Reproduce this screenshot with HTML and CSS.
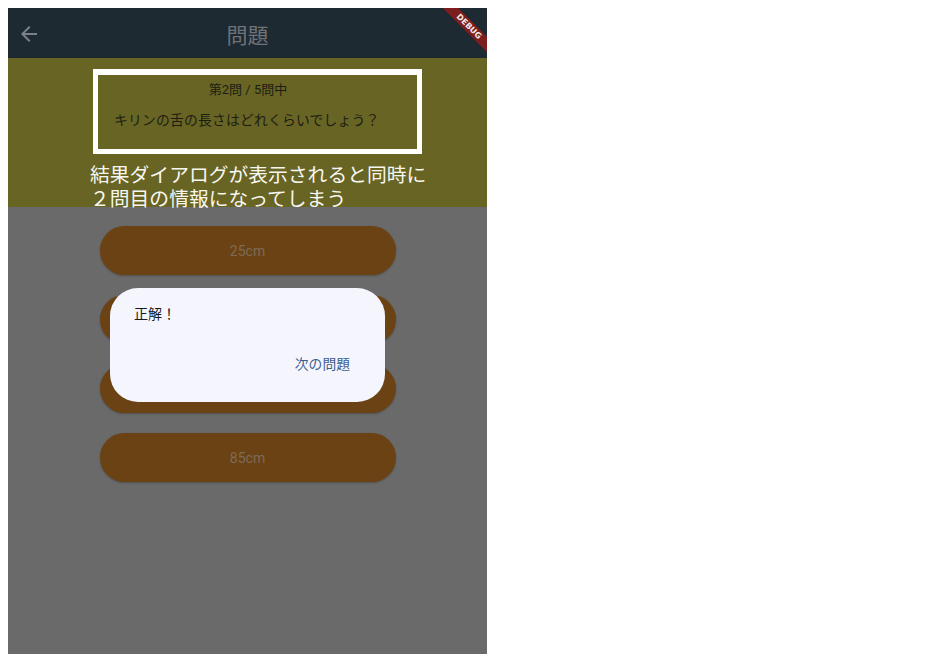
FILE: index.html
```html
<!DOCTYPE html>
<html lang="ja">
<head>
<meta charset="utf-8">
<title>問題</title>
<link rel="stylesheet" href="styles.css">
</head>
<body>
<div class="app">
  <header class="appbar">
    <svg class="back" viewBox="0 0 24 24" width="24" height="24"><path d="M20 11H7.83l5.59-5.59L12 4l-8 8 8 8 1.41-1.41L7.83 13H20v-2z"/></svg>
    <h1 class="title">問題</h1>
  </header>
  <section class="quiz-head">
    <div class="qbox">
      <p class="count">第2問 / 5問中</p>
      <p class="question">キリンの舌の長さはどれくらいでしょう？</p>
    </div>
    <p class="note"><span class="note-line">結果ダイアログが表示されると同時に</span><span class="note-line">２問目の情報になってしまう</span></p>
  </section>
  <div class="answers">
    <button class="answer">25cm</button>
    <button class="answer">45cm</button>
    <button class="answer">65cm</button>
    <button class="answer">85cm</button>
  </div>
  <div class="dialog">
    <p class="dialog-text">正解！</p>
    <div class="dialog-actions"><button class="text-btn">次の問題</button></div>
  </div>
  <div class="debug"><div class="band">DEBUG</div></div>
</div>
</body>
</html>
```
FILE: styles.css
```css
* { box-sizing: border-box; }
body {
  margin: 8px;
  background: #ffffff;
  font-family: "Roboto", "Noto Sans CJK JP", sans-serif;
}
.app {
  position: relative;
  width: 479px;
  height: 646px;
  background: #6a6a6a;
  overflow: hidden;
}
.appbar {
  height: 50px;
  background: #1e2a32;
  display: flex;
  align-items: center;
  position: relative;
}
.back {
  fill: #7b8186;
  margin-left: 9px;
  margin-top: 2px;
}
.title {
  position: absolute;
  left: 0;
  right: 0;
  margin: 0;
  text-align: center;
  font-weight: 400;
  font-size: 21px;
  line-height: 50px;
  padding-top: 1px;
  color: #6e7378;
  font-family: "Noto Sans CJK JP", sans-serif;
}
.quiz-head {
  height: 149px;
  background: #676424;
  padding-top: 11px;
}
.qbox {
  margin-left: 85px;
  width: 329px;
  height: 85px;
  border: 5px solid #ffffff;
  border-top-width: 6px;
  padding: 5px 16px 0;
}
.count {
  margin: 0;
  text-align: center;
  font-size: 13px;
  line-height: 20px;
  color: #1d1d14;
  padding-right: 19px;
}
.question {
  margin: 10px 0 0;
  font-size: 13.8px;
  line-height: 20px;
  color: #1d1d14;
  letter-spacing: 0.2px;
}
.note {
  margin: 8px 0 0 82px;
  font-size: 19.8px;
  color: #f7f7f2;
  font-family: "Noto Sans CJK JP", sans-serif;
  white-space: nowrap;
  display: flex;
  flex-direction: column;
  gap: 1px;
}
.note-line {
  display: block;
  line-height: 23px;
}
.answers {
  padding-top: 19px;
  display: flex;
  flex-direction: column;
  align-items: center;
  gap: 20px;
}
.answer {
  width: 296px;
  height: 49px;
  border: none;
  border-radius: 25px;
  background: #6b4213;
  color: #7d6b58;
  font-family: "Roboto", sans-serif;
  font-size: 14px;
  box-shadow: 0 1px 2px rgba(0,0,0,0.25);
  padding: 0;
}
.dialog {
  position: absolute;
  left: 102px;
  top: 280px;
  width: 275px;
  height: 114px;
  border-radius: 28px;
  background: #f5f6fd;
  padding: 16px 24px 18px;
  display: flex;
  flex-direction: column;
}
.dialog-text {
  margin: 0;
  font-size: 14px;
  line-height: 20px;
  color: #1b1b1f;
}
.dialog-actions {
  margin-top: 19px;
  display: flex;
  justify-content: flex-end;
}
.text-btn {
  height: 40px;
  padding: 0 12px;
  border: none;
  background: transparent;
  color: #3f5d8c;
  font-family: "Roboto", "Noto Sans CJK JP", sans-serif;
  font-size: 13.8px;
  margin-right: -1px;
}
.debug {
  position: absolute;
  top: 0;
  right: 0;
  width: 60px;
  height: 60px;
  overflow: hidden;
}
.band {
  position: absolute;
  width: 90px;
  height: 11px;
  left: calc(60px - 18.25px - 45px);
  top: calc(18.25px - 5.5px);
  transform: rotate(45deg);
  background: #7c1e1e;
  color: #f3e9e9;
  font-family: "DejaVu Sans", sans-serif;
  font-weight: 700;
  font-size: 8px;
  line-height: 11px;
  text-align: center;
  letter-spacing: 0.1px;
}
```
